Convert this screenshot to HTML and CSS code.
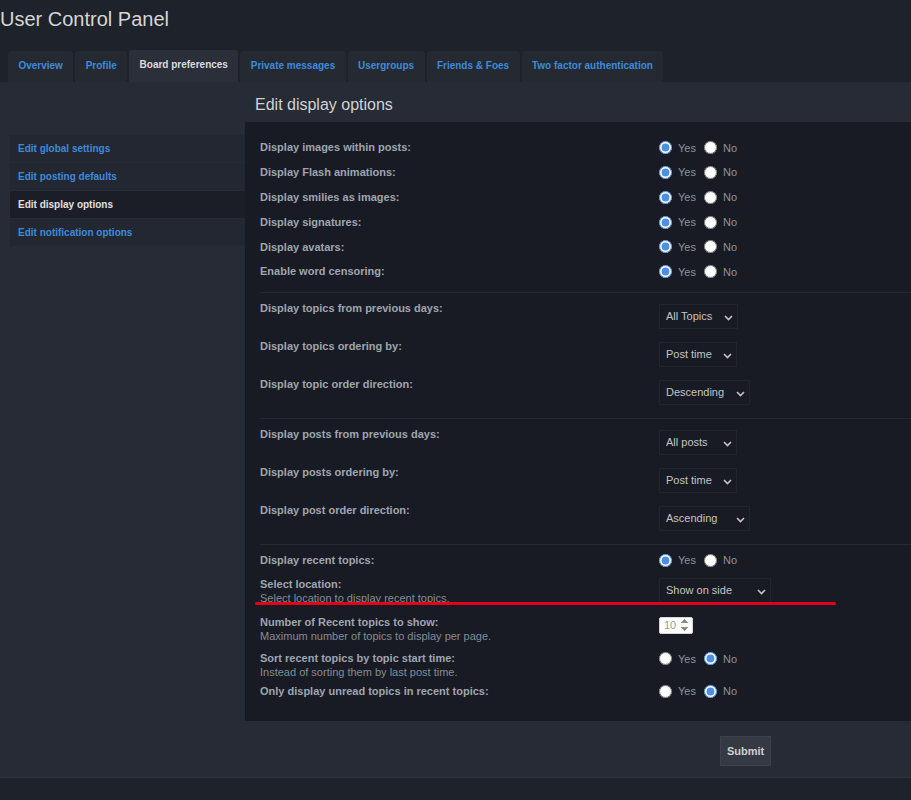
FILE: index.html
```html
<!DOCTYPE html>
<html lang="en">
<head>
    <meta charset="UTF-8">
    <meta name="viewport" content="width=device-width, initial-scale=1.0">
    <title>User Control Panel</title>
    <link rel="stylesheet" href="styles.css">
</head>
<body>
    <header class="page-header">
        <h1 class="page-title">User Control Panel</h1>
    </header>

    <nav class="tabs">
        <a class="tab" href="#">Overview</a>
        <a class="tab" href="#">Profile</a>
        <a class="tab active" href="#">Board preferences</a>
        <a class="tab" href="#">Private messages</a>
        <a class="tab" href="#">Usergroups</a>
        <a class="tab" href="#">Friends &amp; Foes</a>
        <a class="tab" href="#">Two factor authentication</a>
    </nav>

    <div class="panel">
        <aside class="side">
            <ul class="side-menu">
                <li><a href="#">Edit global settings</a></li>
                <li><a href="#">Edit posting defaults</a></li>
                <li class="active"><a href="#">Edit display options</a></li>
                <li><a href="#">Edit notification options</a></li>
            </ul>
        </aside>

        <main class="main">
            <h2 class="main-title">Edit display options</h2>
            <form class="options" onsubmit="return false">
                <div class="options-box">
                    <fieldset class="group">
                        <dl class="row row-radio">
                            <dt><label>Display images within posts:</label></dt>
                            <dd>
                                <label class="choice"><input type="radio" name="images" checked> Yes</label>
                                <label class="choice"><input type="radio" name="images"> No</label>
                            </dd>
                        </dl>
                        <dl class="row row-radio">
                            <dt><label>Display Flash animations:</label></dt>
                            <dd>
                                <label class="choice"><input type="radio" name="flash" checked> Yes</label>
                                <label class="choice"><input type="radio" name="flash"> No</label>
                            </dd>
                        </dl>
                        <dl class="row row-radio">
                            <dt><label>Display smilies as images:</label></dt>
                            <dd>
                                <label class="choice"><input type="radio" name="smilies" checked> Yes</label>
                                <label class="choice"><input type="radio" name="smilies"> No</label>
                            </dd>
                        </dl>
                        <dl class="row row-radio">
                            <dt><label>Display signatures:</label></dt>
                            <dd>
                                <label class="choice"><input type="radio" name="sigs" checked> Yes</label>
                                <label class="choice"><input type="radio" name="sigs"> No</label>
                            </dd>
                        </dl>
                        <dl class="row row-radio">
                            <dt><label>Display avatars:</label></dt>
                            <dd>
                                <label class="choice"><input type="radio" name="avatars" checked> Yes</label>
                                <label class="choice"><input type="radio" name="avatars"> No</label>
                            </dd>
                        </dl>
                        <dl class="row row-radio">
                            <dt><label>Enable word censoring:</label></dt>
                            <dd>
                                <label class="choice"><input type="radio" name="censor" checked> Yes</label>
                                <label class="choice"><input type="radio" name="censor"> No</label>
                            </dd>
                        </dl>
                    </fieldset>

                    <fieldset class="group">
                        <dl class="row row-select">
                            <dt><label>Display topics from previous days:</label></dt>
                            <dd>
                                <span class="select-wrap">
                                    <select class="select">
                                        <option>All Topics</option>
                                        <option>1 day</option>
                                        <option>7 days</option>
                                        <option>2 weeks</option>
                                        <option>1 month</option>
                                        <option>3 months</option>
                                        <option>6 months</option>
                                        <option>1 year</option>
                                    </select>
                                    <svg class="chev" width="9" height="6" viewBox="0 0 9 6"><path d="M1 1l3.5 3.5L8 1" fill="none" stroke="#c4c4c4" stroke-width="1.6"/></svg>
                                </span>
                            </dd>
                        </dl>
                        <dl class="row row-select">
                            <dt><label>Display topics ordering by:</label></dt>
                            <dd>
                                <span class="select-wrap">
                                    <select class="select">
                                        <option>Post time</option>
                                        <option>Author</option>
                                        <option>Replies</option>
                                        <option>Subject</option>
                                        <option>Views</option>
                                    </select>
                                    <svg class="chev" width="9" height="6" viewBox="0 0 9 6"><path d="M1 1l3.5 3.5L8 1" fill="none" stroke="#c4c4c4" stroke-width="1.6"/></svg>
                                </span>
                            </dd>
                        </dl>
                        <dl class="row row-select">
                            <dt><label>Display topic order direction:</label></dt>
                            <dd>
                                <span class="select-wrap">
                                    <select class="select">
                                        <option>Descending</option>
                                        <option>Ascending</option>
                                    </select>
                                    <svg class="chev" width="9" height="6" viewBox="0 0 9 6"><path d="M1 1l3.5 3.5L8 1" fill="none" stroke="#c4c4c4" stroke-width="1.6"/></svg>
                                </span>
                            </dd>
                        </dl>
                    </fieldset>

                    <fieldset class="group">
                        <dl class="row row-select">
                            <dt><label>Display posts from previous days:</label></dt>
                            <dd>
                                <span class="select-wrap">
                                    <select class="select">
                                        <option>All posts</option>
                                        <option>1 day</option>
                                        <option>7 days</option>
                                        <option>2 weeks</option>
                                        <option>1 month</option>
                                        <option>3 months</option>
                                        <option>6 months</option>
                                        <option>1 year</option>
                                    </select>
                                    <svg class="chev" width="9" height="6" viewBox="0 0 9 6"><path d="M1 1l3.5 3.5L8 1" fill="none" stroke="#c4c4c4" stroke-width="1.6"/></svg>
                                </span>
                            </dd>
                        </dl>
                        <dl class="row row-select">
                            <dt><label>Display posts ordering by:</label></dt>
                            <dd>
                                <span class="select-wrap">
                                    <select class="select">
                                        <option>Post time</option>
                                        <option>Author</option>
                                        <option>Subject</option>
                                    </select>
                                    <svg class="chev" width="9" height="6" viewBox="0 0 9 6"><path d="M1 1l3.5 3.5L8 1" fill="none" stroke="#c4c4c4" stroke-width="1.6"/></svg>
                                </span>
                            </dd>
                        </dl>
                        <dl class="row row-select">
                            <dt><label>Display post order direction:</label></dt>
                            <dd>
                                <span class="select-wrap">
                                    <select class="select">
                                        <option>Ascending</option>
                                        <option>Descending</option>
                                    </select>
                                    <svg class="chev" width="9" height="6" viewBox="0 0 9 6"><path d="M1 1l3.5 3.5L8 1" fill="none" stroke="#c4c4c4" stroke-width="1.6"/></svg>
                                </span>
                            </dd>
                        </dl>
                    </fieldset>

                    <fieldset class="group">
                        <dl class="row row-radio">
                            <dt><label>Display recent topics:</label></dt>
                            <dd>
                                <label class="choice"><input type="radio" name="recent" checked> Yes</label>
                                <label class="choice"><input type="radio" name="recent"> No</label>
                            </dd>
                        </dl>
                        <dl class="row row-explain">
                            <dt>
                                <label>Select location:</label>
                                <span class="explain">Select location to display recent topics.</span>
                            </dt>
                            <dd>
                                <span class="select-wrap select-spaced">
                                    <select class="select">
                                        <option>Show on side</option>
                                        <option>Show on top</option>
                                        <option>Show on bottom</option>
                                    </select>
                                    <svg class="chev" width="9" height="6" viewBox="0 0 9 6"><path d="M1 1l3.5 3.5L8 1" fill="none" stroke="#c4c4c4" stroke-width="1.6"/></svg>
                                </span>
                            </dd>
                        </dl>
                        <dl class="row row-explain">
                            <dt>
                                <label>Number of Recent topics to show:</label>
                                <span class="explain">Maximum number of topics to display per page.</span>
                            </dt>
                            <dd><input class="num" type="number" value="10" min="1"></dd>
                        </dl>
                        <dl class="row row-explain row-tight">
                            <dt>
                                <label>Sort recent topics by topic start time:</label>
                                <span class="explain">Instead of sorting them by last post time.</span>
                            </dt>
                            <dd>
                                <label class="choice"><input type="radio" name="sortstart"> Yes</label>
                                <label class="choice"><input type="radio" name="sortstart" checked> No</label>
                            </dd>
                        </dl>
                        <dl class="row row-radio">
                            <dt><label>Only display unread topics in recent topics:</label></dt>
                            <dd>
                                <label class="choice"><input type="radio" name="unread"> Yes</label>
                                <label class="choice"><input type="radio" name="unread" checked> No</label>
                            </dd>
                        </dl>
                    </fieldset>

                    <!-- red marker drawn over the screenshot -->
                    <div class="marker"></div>
                </div>

                <div class="submit-row">
                    <button type="submit" class="btn">Submit</button>
                </div>
            </form>
        </main>
    </div>

    <footer class="page-footer"></footer>
</body>
</html>
```

FILE: styles.css
```css
body {
    font-family: "Liberation Sans", Arial, sans-serif;
    background-color: #1e222a;
    color: #9fa5b0;
    margin: 0;
    font-size: 11px;
}

.page-title {
    margin: 0;
    padding-top: 7px;
    font-size: 20px;
    line-height: 24px;
    font-weight: normal;
    color: #d6d6d6;
}

/* Tabs */
.tabs {
    display: flex;
    align-items: flex-end;
    gap: 2px;
    height: 32px;
    margin-top: 19px;
    padding-left: 8px;
}

.tab {
    display: block;
    padding: 8px 10.4px 10px;
    line-height: 13px;
    font-size: 10px;
    font-weight: bold;
    color: #3d8bdc;
    text-decoration: none;
    background-color: #252932;
    border-radius: 3px 3px 0 0;
}

.tab.active {
    padding-bottom: 11px;
    color: #dcdcdc;
    background-color: #2a2f3a;
}

/* Panel */
.panel {
    display: flex;
    background-color: #262b36;
}

.side {
    width: 235px;
    padding: 53px 0 0 10px;
    flex-shrink: 0;
}

.side-menu {
    list-style: none;
    margin: 0;
    padding: 0;
}

.side-menu li {
    height: 27px;
    margin-bottom: 1px;
    background-color: #232731;
}

.side-menu a {
    display: block;
    padding-left: 8px;
    line-height: 27px;
    font-size: 10px;
    font-weight: bold;
    color: #3d8bdc;
    text-decoration: none;
}

.side-menu li.active {
    background-color: #1b1e26;
}

.side-menu li.active a {
    color: #e0e0e0;
}

.main {
    flex: 1;
    min-width: 0;
}

.main-title {
    margin: 0;
    padding: 13px 10px 7px;
    font-size: 16px;
    line-height: 20px;
    font-weight: normal;
    color: #d2d2d2;
}

/* Options box */
.options-box {
    position: relative;
    background-color: #181b23;
    padding: 10px 0 10px 15px;
}

.group {
    margin: 0;
    padding: 3px 0 8px;
    border: 0;
    border-top: 1px solid #252a33;
    min-width: 0;
}

.group:first-child {
    border-top: 0;
}

.row {
    display: grid;
    grid-template-columns: 399px 1fr;
    margin: 0;
}

.row dt,
.row dd {
    margin: 0;
}

.row dt label {
    display: block;
    font-weight: bold;
    line-height: 14px;
}

.row-radio {
    height: 24.8px;
    align-items: center;
}

.row-radio dd {
    padding-top: 2px;
}

.row-select {
    padding: 5px 0;
    align-items: start;
}

.row-select dd {
    padding-top: 3px;
}

.row-explain {
    padding: 4px 0;
    align-items: start;
}

.row-explain dd {
    padding-top: 1px;
}

.row-tight {
    padding-bottom: 0;
}

.explain {
    display: block;
    line-height: 14px;
    color: #868b94;
}

.choice {
    display: inline-flex;
    align-items: center;
    margin-right: 5px;
    color: #8e939c;
    line-height: 14px;
}

.choice input {
    width: 13px;
    height: 13px;
    margin: 0 6px 0 0;
    accent-color: #4d8fe0;
}

.select-wrap {
    position: relative;
    display: inline-block;
}

.select-spaced {
    margin-bottom: 4px;
}

.select {
    appearance: none;
    -webkit-appearance: none;
    height: 25px;
    padding: 0 24px 0 6px;
    font-family: "Liberation Sans", Arial, sans-serif;
    font-size: 11px;
    color: #c4c4c4;
    background-color: #181b23;
    border: 1px solid #21252d;
    border-radius: 0;
    outline: none;
}

.chev {
    position: absolute;
    right: 5px;
    top: 11px;
    pointer-events: none;
}

.num {
    box-sizing: border-box;
    width: 34px;
    height: 17px;
    margin: 1px 0 0;
    padding: 0 0 0 4px;
    font-family: "Liberation Sans", Arial, sans-serif;
    font-size: 11px;
    color: #9a9a9a;
    background-color: #fff;
    border: 1px solid #d6d6d6;
    border-radius: 2px;
}

.num::-webkit-inner-spin-button {
    opacity: 1;
}

.marker {
    position: absolute;
    left: 10px;
    top: 480px;
    width: 581px;
    height: 3px;
    border-radius: 2px;
    background-color: #e3001b;
}

/* Submit */
.submit-row {
    padding: 15px 0 11px 475px;
}

.btn {
    box-sizing: border-box;
    height: 30px;
    padding: 0 6px;
    font-family: "Liberation Sans", Arial, sans-serif;
    font-size: 11px;
    font-weight: bold;
    color: #d0d0d0;
    background-color: #343944;
    border: 1px solid #3d424d;
    cursor: pointer;
}

.page-footer {
    height: 40px;
    border-top: 1px solid #2c313b;
    background-color: #1e222a;
}
```
